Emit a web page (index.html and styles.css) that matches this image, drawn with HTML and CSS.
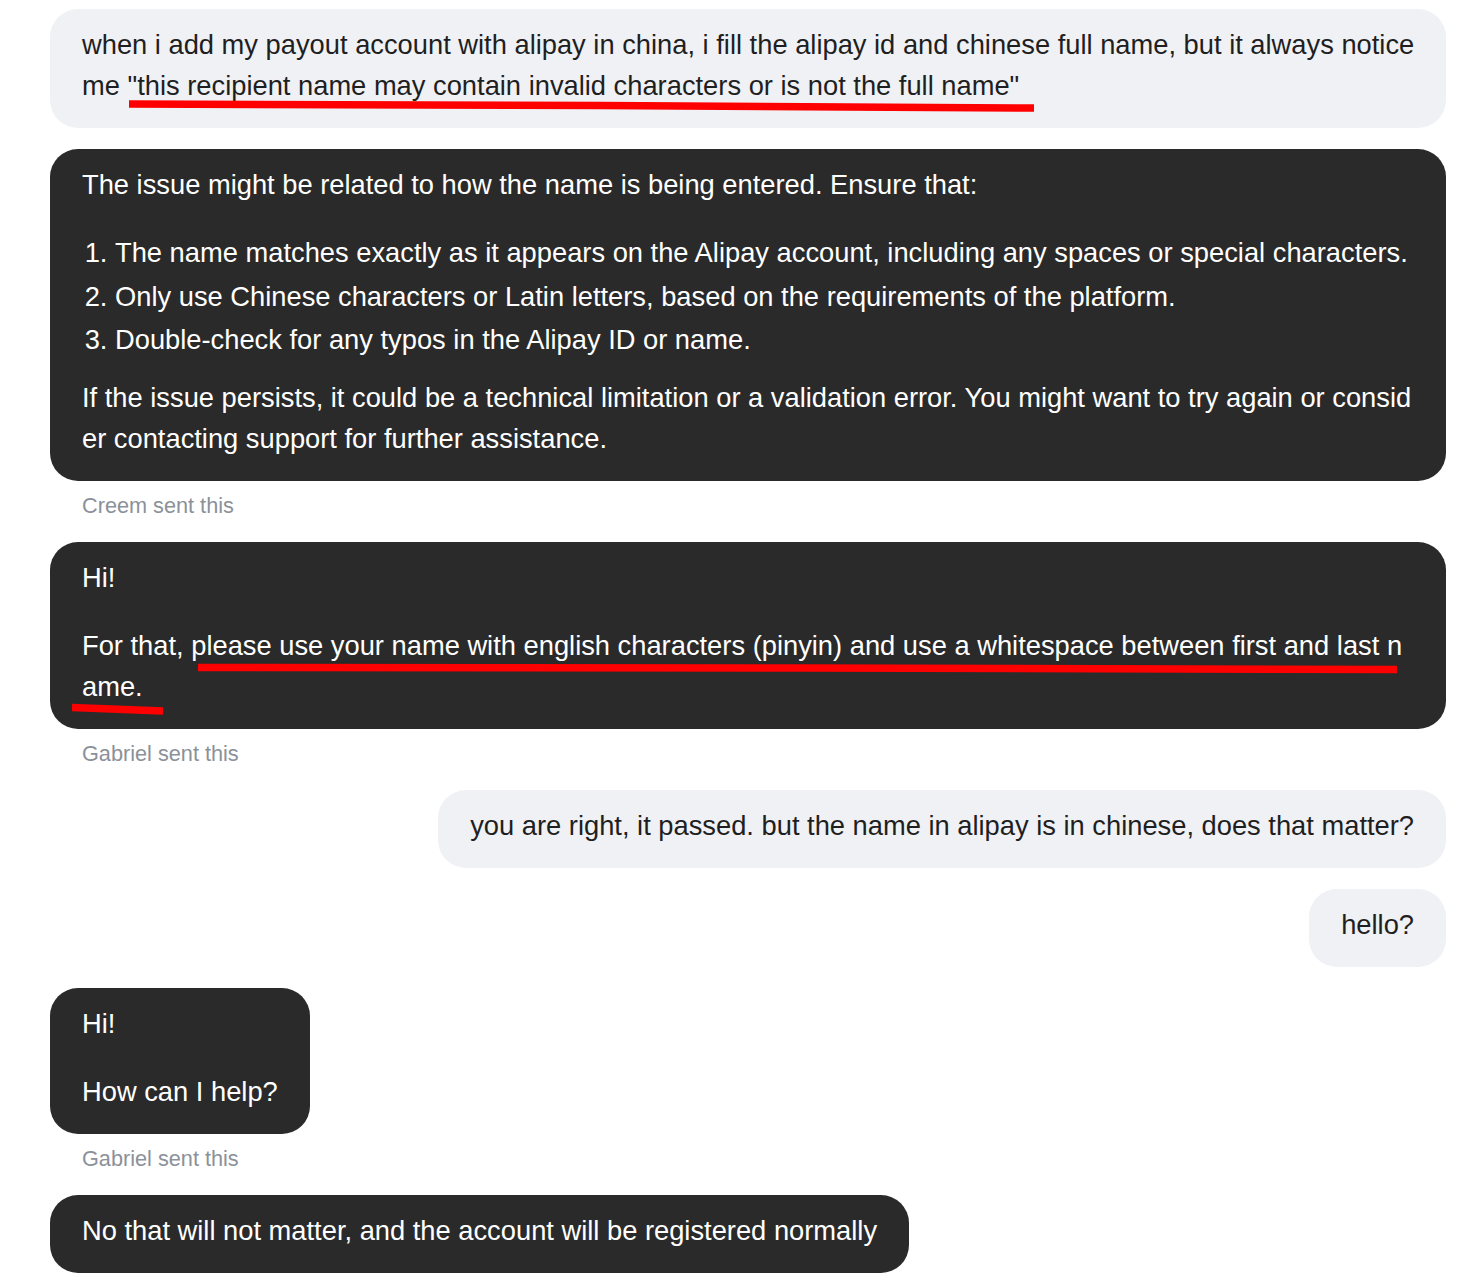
FILE: index.html
```html
<!DOCTYPE html>
<html lang="en">
<head>
<meta charset="utf-8">
<title>Chat</title>
<link rel="stylesheet" href="styles.css">
</head>
<body>
<div class="chat">
  <div class="msg user wide">
    <div class="bubble light">
      <p>when i add my payout account with alipay in china, i fill the alipay id and chinese full name, but it always notice me "this recipient name may contain invalid characters or is not the full name"</p>
    </div>
  </div>

  <div class="msg agent">
    <div class="bubble dark">
      <p class="lead">The issue might be related to how the name is being entered. Ensure that:</p>
      <ol class="steps">
        <li>The name matches exactly as it appears on the Alipay account, including any spaces or special characters.</li>
        <li>Only use Chinese characters or Latin letters, based on the requirements of the platform.</li>
        <li>Double-check for any typos in the Alipay ID or name.</li>
      </ol>
      <p>If the issue persists, it could be a technical limitation or a validation error. You might want to try again or consider contacting support for further assistance.</p>
    </div>
    <div class="meta">Creem sent this</div>
  </div>

  <div class="msg agent">
    <div class="bubble dark">
      <p class="lead">Hi!</p>
      <p>For that, please use your name with english characters (pinyin) and use a whitespace between first and last name.</p>
    </div>
    <div class="meta">Gabriel sent this</div>
  </div>

  <div class="msg user">
    <div class="bubble light">
      <p>you are right, it passed. but the name in alipay is in chinese, does that matter?</p>
    </div>
  </div>

  <div class="msg user">
    <div class="bubble light">
      <p>hello?</p>
    </div>
  </div>

  <div class="msg agent">
    <div class="bubble dark">
      <p class="lead">Hi!</p>
      <p>How can I help?</p>
    </div>
    <div class="meta">Gabriel sent this</div>
  </div>

  <div class="msg agent">
    <div class="bubble dark">
      <p>No that will not matter, and the account will be registered normally</p>
    </div>
  </div>
</div>

<svg class="marks" width="1468" height="1281" viewBox="0 0 1468 1281" aria-hidden="true">
  <path d="M129 104 L600 105.5 L1034 108" />
  <path d="M198 667.5 L800 668 L1397 669.5" />
  <path d="M72 707.5 L163 711" />
</svg>
</body>
</html>
```

FILE: styles.css
```css
html, body {
  margin: 0;
  padding: 0;
  background: #ffffff;
}

body {
  position: relative;
  font-family: "Liberation Sans", Arial, sans-serif;
  font-size: 27.3px;
  line-height: 41px;
  color: #1f1f1f;
}

.chat {
  display: flex;
  flex-direction: column;
  gap: 21px;
  padding: 9px 22px 0 50px;
}

.msg {
  display: flex;
  flex-direction: column;
}

.msg.agent {
  align-items: flex-start;
}

.msg.user {
  align-items: flex-end;
}

.msg.user.wide {
  align-items: stretch;
}

.bubble {
  border-radius: 28px;
  padding: 15px 32px 22px 32px;
}

.bubble p {
  margin: 0;
}

.bubble p.lead {
  margin-bottom: 27px;
}

.light {
  background: #f0f1f5;
  color: #1f1f1f;
}

.user.wide .light {
  padding-right: 28px;
}

.dark {
  background: #2a2a2a;
  color: #ffffff;
  word-break: break-all;
}

.steps {
  margin: 0 0 17px 0;
  padding-left: 33px;
}

.steps li + li {
  margin-top: 2.5px;
}

.meta {
  margin-top: 9px;
  padding-left: 32px;
  font-size: 21.7px;
  line-height: 31px;
  color: #8b9199;
}

.marks {
  position: absolute;
  left: 0;
  top: 0;
  pointer-events: none;
}

.marks path {
  fill: none;
  stroke: #ff0000;
  stroke-width: 7.5;
  stroke-linecap: butt;
}
```
